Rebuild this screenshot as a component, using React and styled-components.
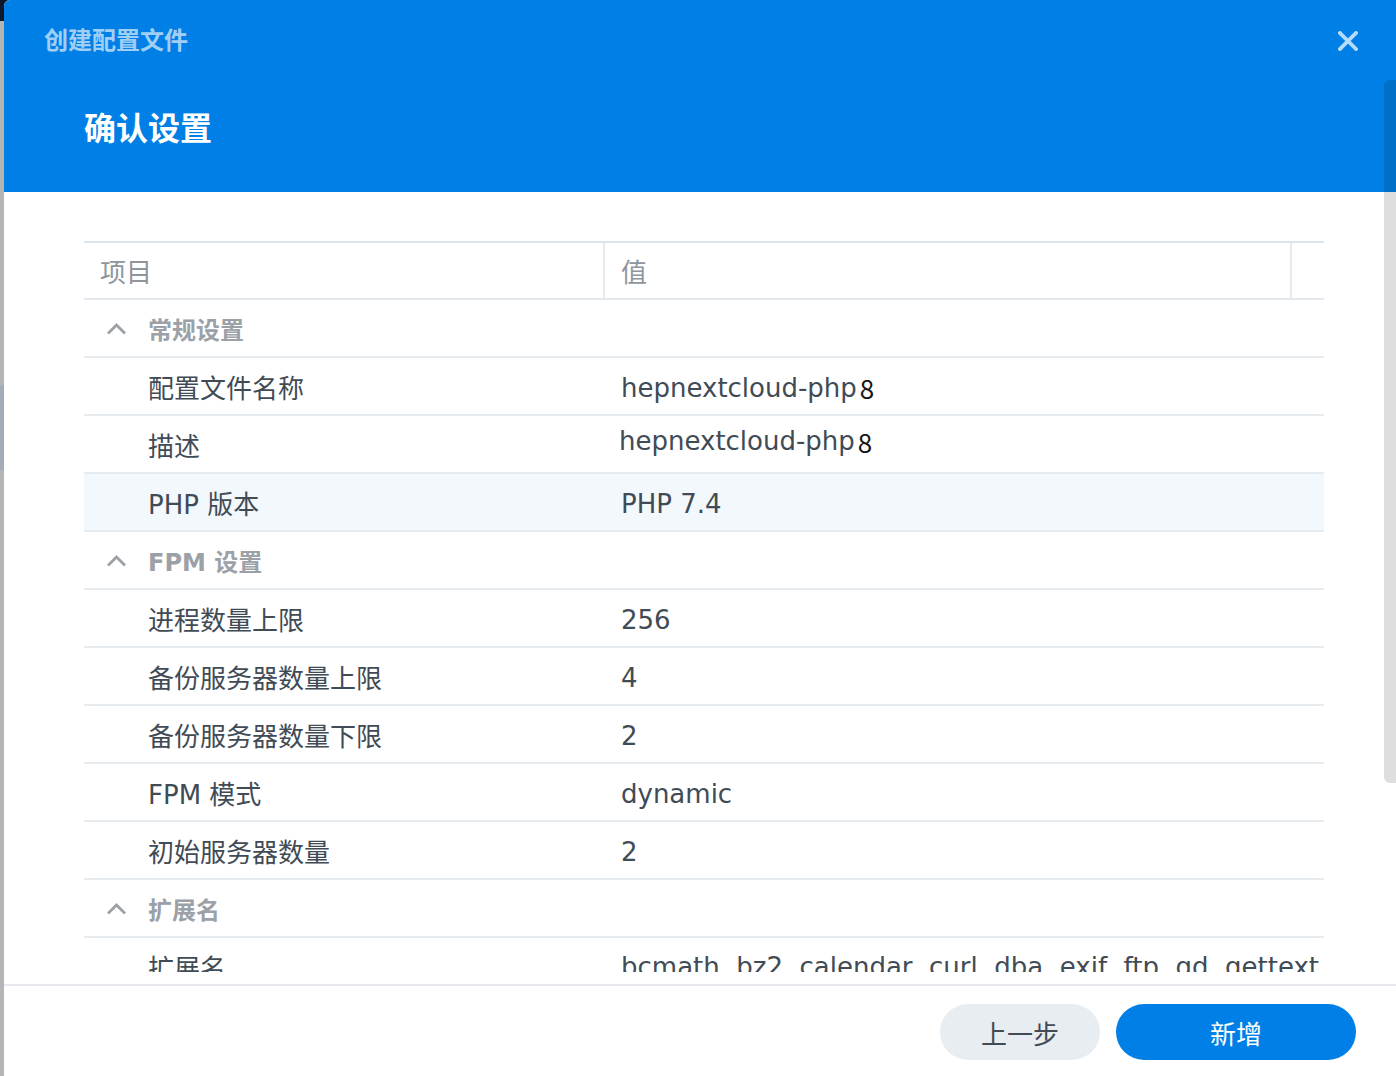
import React from "react";
import styled, { createGlobalStyle } from "styled-components";

const GlobalStyle = createGlobalStyle`
  html, body {
    margin: 0;
    padding: 0;
  }
  body {
    background: linear-gradient(
      to bottom,
      #0c1a2b 0,
      #0c1a2b 21px,
      #b5b5b5 21px,
      #b5b5b5 385px,
      #a3acb7 385px,
      #a3acb7 470px,
      #b5b5b5 470px
    );
    font-family: "DejaVu Sans", "Noto Sans CJK SC", sans-serif;
  }
  * {
    box-sizing: border-box;
  }
`;

const Page = styled.div`
  display: flex;
  height: 1076px;
  padding-left: 4px;
`;

const Dialog = styled.div`
  position: relative;
  flex: 1;
  display: flex;
  flex-direction: column;
  background: #fff;
  border-top-left-radius: 6px;
  overflow: hidden;
`;

const Header = styled.div`
  flex-shrink: 0;
  height: 192px;
  background: #0080e6;
`;

const TopBar = styled.div`
  height: 80px;
  display: flex;
  align-items: center;
  justify-content: space-between;
  padding: 1px 38px 0 40px;
`;

const SmallTitle = styled.div`
  font-size: 24px;
  font-weight: 700;
  line-height: 1;
  color: rgba(255, 255, 255, 0.65);
`;

const CloseButton = styled.button`
  width: 20px;
  height: 20px;
  padding: 0;
  border: none;
  background: none;
  display: flex;
  cursor: pointer;
`;

const MainTitle = styled.h1`
  margin: 0;
  padding: 29px 0 0 80px;
  font-size: 32px;
  line-height: 40px;
  font-weight: 700;
  color: #fff;
`;

const Body = styled.div`
  flex: 1;
  min-height: 0;
  display: flex;
  flex-direction: column;
  padding: 49px 72px 12px 80px;
`;

const Scroller = styled.div`
  flex: 1;
  min-height: 0;
  overflow: hidden;
`;

const Table = styled.div`
  border-top: 2px solid #dce4ec;
`;

const HeadRow = styled.div`
  display: grid;
  grid-template-columns: 521px 1fr 32px;
  border-bottom: 2px solid #e3e9ef;
`;

const HeadCell = styled.div`
  height: 55px;
  display: flex;
  align-items: center;
  padding-left: 16px;
  font-size: 26px;
  color: #8e969c;
  border-right: ${(p) => (p.$last ? "none" : "2px solid #e6ebf0")};
`;

const Row = styled.div`
  display: grid;
  grid-template-columns: 519px 1fr;
  height: 58px;
  border-bottom: 2px solid #e6ebf0;
  background: ${(p) => (p.$active ? "#f3f8fd" : "#fff")};
  font-size: 26px;
  color: #414b55;
`;

const ItemCell = styled.div`
  display: flex;
  align-items: center;
  padding-left: 64px;
  white-space: nowrap;
`;

const ValueCell = styled.div`
  display: flex;
  align-items: ${(p) => (p.$top ? "flex-start" : "center")};
  padding-top: ${(p) => (p.$top ? "14px" : p.$nudge ? "0" : "3px")};
  padding-left: ${(p) => (p.$nudge ? "16px" : "18px")};
  padding-bottom: ${(p) => (p.$nudge ? "6px" : "0")};
  white-space: nowrap;
  overflow: hidden;
`;

const Digit = styled.span`
  font-family: "Noto Sans CJK SC", sans-serif;
  color: #151515;
  margin-left: 3px;
`;

const GroupRow = styled.div`
  display: flex;
  align-items: center;
  gap: 21px;
  height: 58px;
  padding-left: 22px;
  border-bottom: 2px solid #e6ebf0;
`;

const GroupLabel = styled.span`
  font-size: 24px;
  font-weight: 700;
  color: #9ba1a6;
`;

const Footer = styled.div`
  flex-shrink: 0;
  display: flex;
  justify-content: flex-end;
  gap: 16px;
  padding: 18px 40px 16px;
  border-top: 2px solid #e5e9ef;
`;

const Button = styled.button`
  width: ${(p) => p.$width}px;
  height: 56px;
  border: none;
  border-radius: 28px;
  font-family: inherit;
  font-size: 26px;
  cursor: pointer;
  background: ${(p) => (p.$primary ? "#0080e6" : "#e8edf2")};
  color: ${(p) => (p.$primary ? "#fff" : "#414b55")};
`;

const ScrollThumb = styled.div`
  position: absolute;
  top: 80px;
  right: 0;
  width: 12px;
  height: 703px;
  border-radius: 6px 0 0 6px;
  background: rgba(0, 0, 0, 0.13);
`;

const Chevron = () => (
  <svg width="21" height="13" viewBox="0 0 21 13">
    <polyline
      points="2,11.5 10.5,3 19,11.5"
      fill="none"
      stroke="#9ba1a6"
      strokeWidth="2.8"
    />
  </svg>
);

const CloseIcon = () => (
  <svg width="20" height="20" viewBox="0 0 20 20">
    <path
      d="M2 2 L18 18 M18 2 L2 18"
      stroke="#b5dcfa"
      strokeWidth="3.8"
      strokeLinecap="square"
    />
  </svg>
);

const Group = ({ label }) => (
  <GroupRow>
    <Chevron />
    <GroupLabel>{label}</GroupLabel>
  </GroupRow>
);

const Item = ({ name, value, active, nudge, top }) => (
  <Row $active={active}>
    <ItemCell>{name}</ItemCell>
    <ValueCell $nudge={nudge} $top={top}>
      {value}
    </ValueCell>
  </Row>
);

const fpmRows = [
  ["进程数量上限", "256"],
  ["备份服务器数量上限", "4"],
  ["备份服务器数量下限", "2"],
  ["FPM 模式", "dynamic"],
  ["初始服务器数量", "2"],
];

export default function App() {
  return (
    <>
      <GlobalStyle />
      <Page>
        <Dialog>
          <Header>
            <TopBar>
              <SmallTitle>创建配置文件</SmallTitle>
              <CloseButton aria-label="关闭">
                <CloseIcon />
              </CloseButton>
            </TopBar>
            <MainTitle>确认设置</MainTitle>
          </Header>

          <Body>
            <Scroller>
              <Table>
                <HeadRow>
                  <HeadCell>项目</HeadCell>
                  <HeadCell>值</HeadCell>
                  <HeadCell $last />
                </HeadRow>

                <Group label="常规设置" />
                <Item
                  name="配置文件名称"
                  value={
                    <>
                      hepnextcloud-php<Digit>8</Digit>
                    </>
                  }
                />
                <Item
                  name="描述"
                  nudge
                  value={
                    <>
                      hepnextcloud-php<Digit>8</Digit>
                    </>
                  }
                />
                <Item name="PHP 版本" value="PHP 7.4" active />

                <Group label="FPM 设置" />
                {fpmRows.map(([name, value]) => (
                  <Item key={name} name={name} value={value} />
                ))}

                <Group label="扩展名" />
                <Item
                  name="扩展名"
                  top
                  value="bcmath, bz2, calendar, curl, dba, exif, ftp, gd, gettext, gmp, iconv, imap"
                />
              </Table>
            </Scroller>
          </Body>

          <Footer>
            <Button $width={160}>上一步</Button>
            <Button $width={240} $primary>
              新增
            </Button>
          </Footer>

          <ScrollThumb />
        </Dialog>
      </Page>
    </>
  );
}
